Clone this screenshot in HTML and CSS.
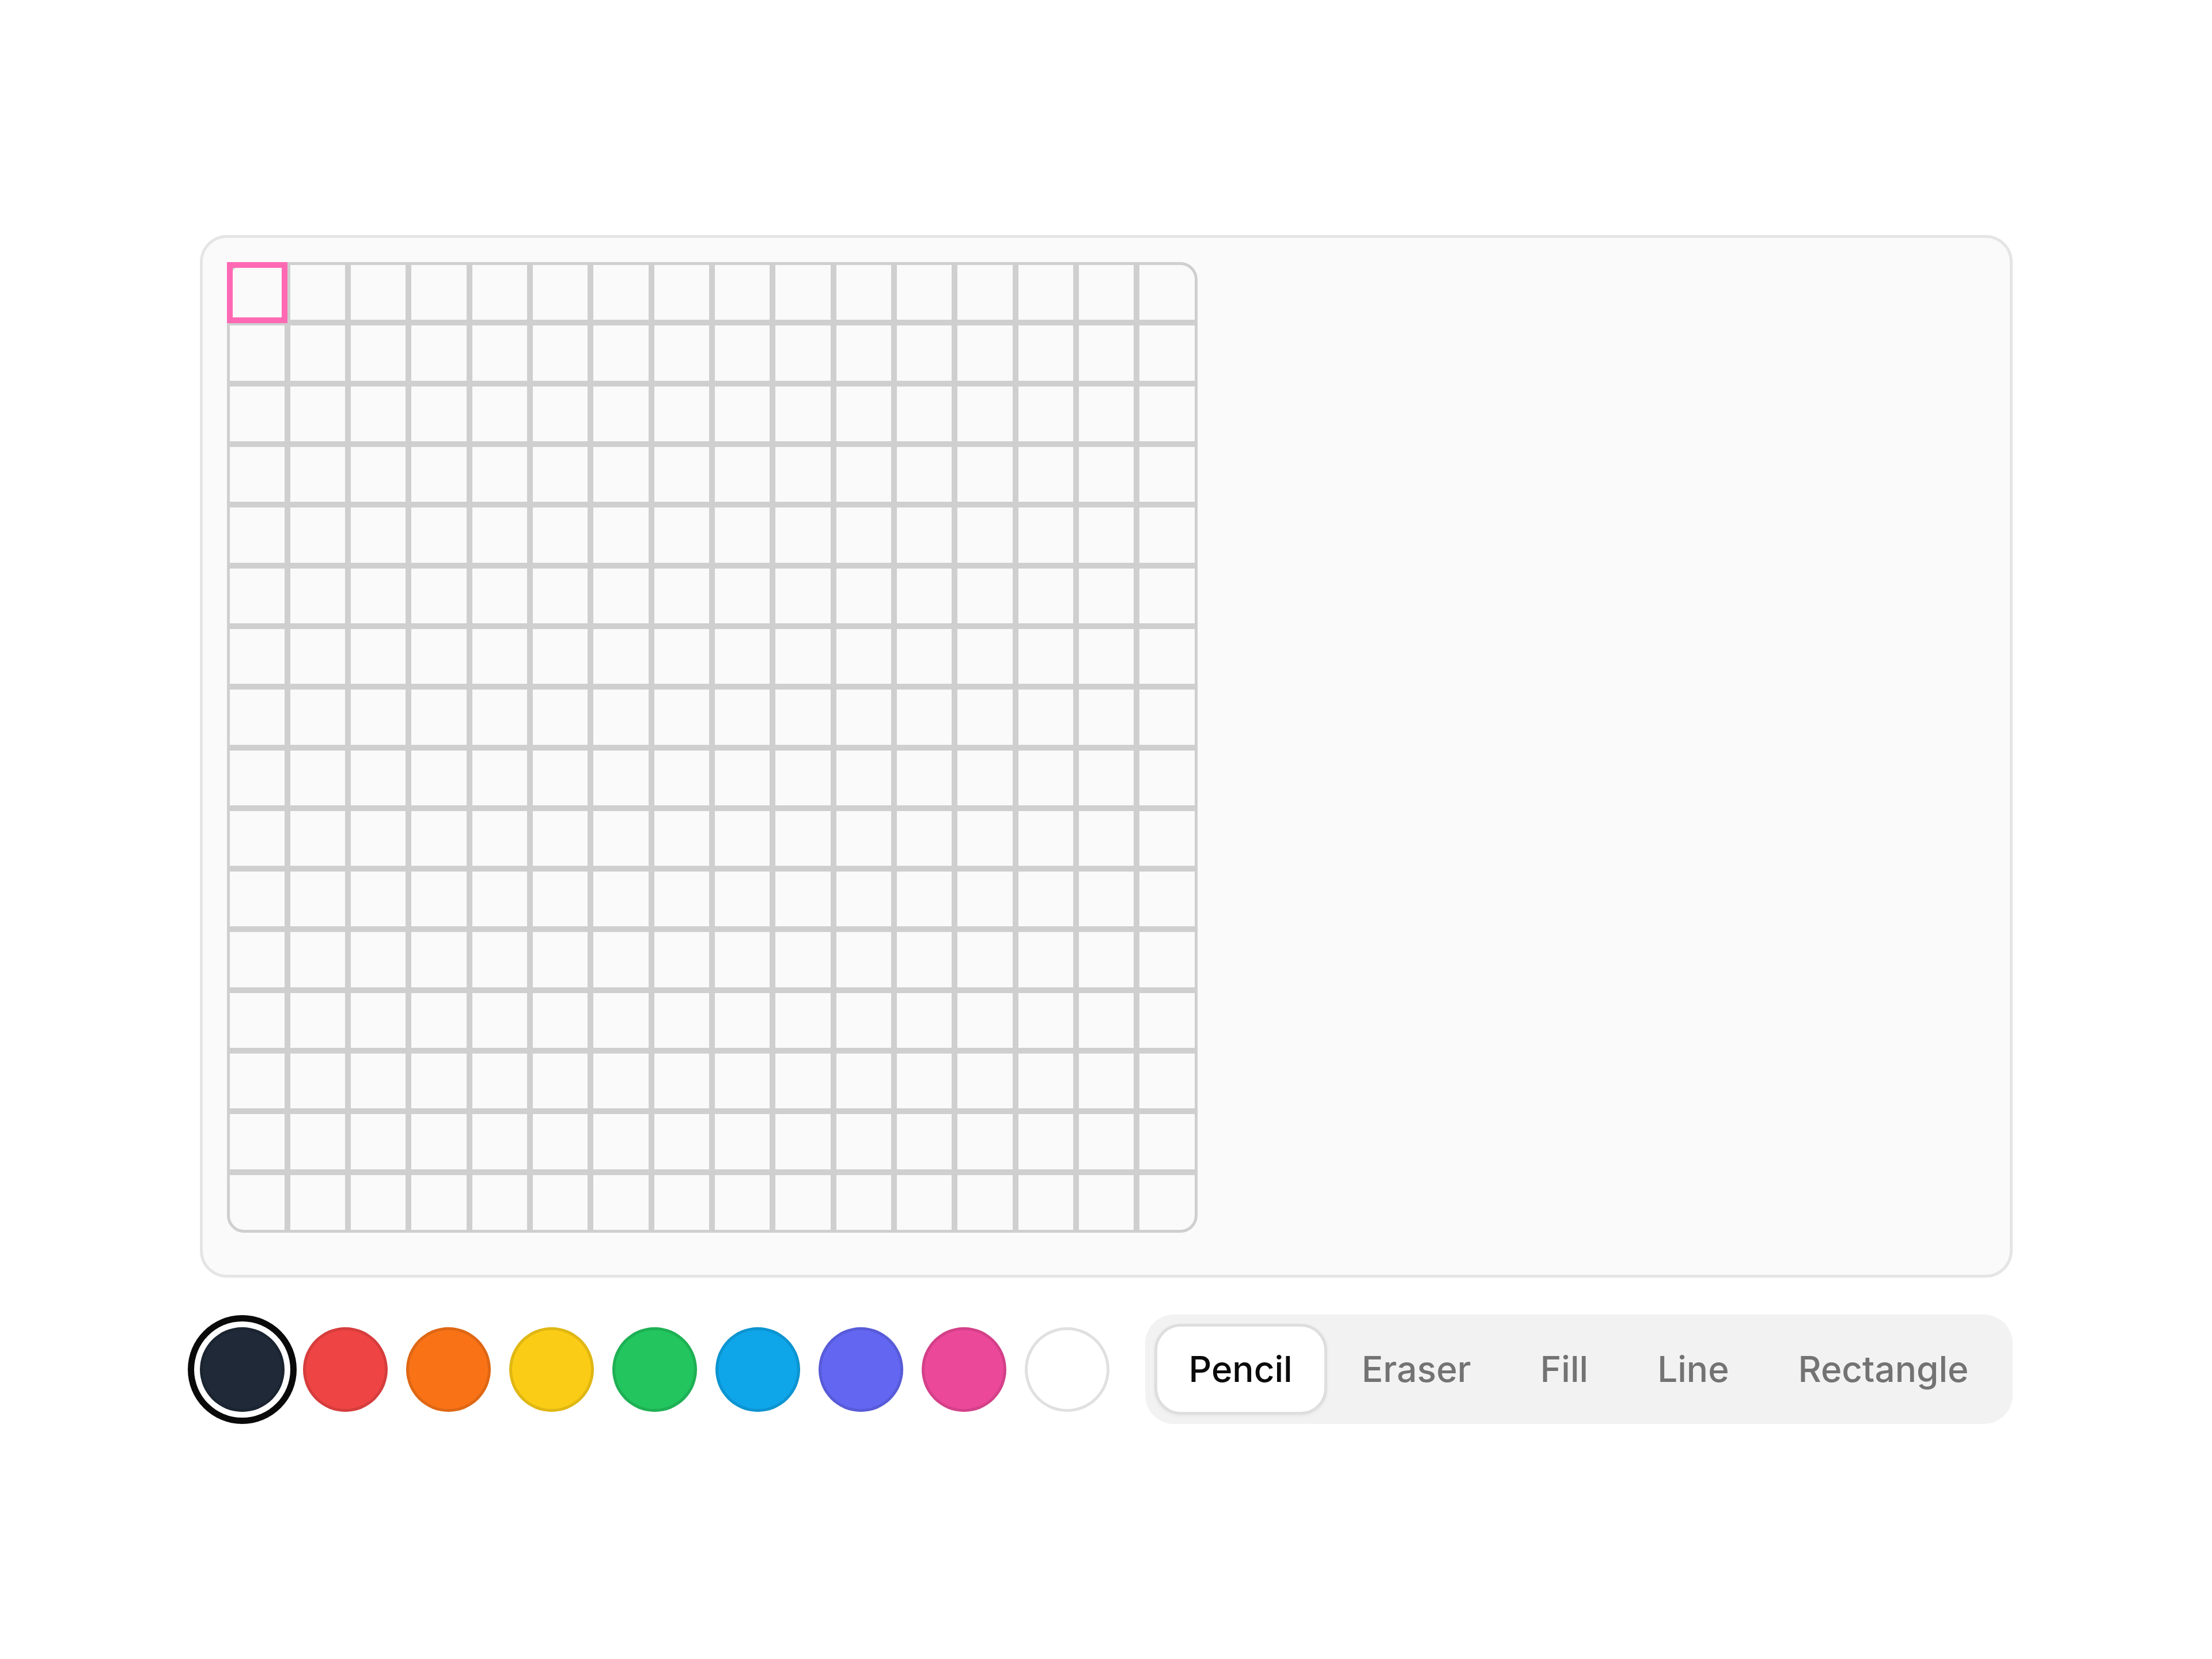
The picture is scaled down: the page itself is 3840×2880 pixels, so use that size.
FILE: index.html
```html
<!DOCTYPE html>
<html lang="en">
<head>
<meta charset="utf-8">
<title>Pixel Editor</title>
<link rel="stylesheet" href="styles.css">
</head>
<body>
<main class="editor">
  <section class="panel">
    <div class="board">
      <div class="grid">
        <span class="c"></span><span class="c"></span><span class="c"></span><span class="c"></span><span class="c"></span><span class="c"></span><span class="c"></span><span class="c"></span><span class="c"></span><span class="c"></span><span class="c"></span><span class="c"></span><span class="c"></span><span class="c"></span><span class="c"></span><span class="c"></span>
        <span class="c"></span><span class="c"></span><span class="c"></span><span class="c"></span><span class="c"></span><span class="c"></span><span class="c"></span><span class="c"></span><span class="c"></span><span class="c"></span><span class="c"></span><span class="c"></span><span class="c"></span><span class="c"></span><span class="c"></span><span class="c"></span>
        <span class="c"></span><span class="c"></span><span class="c"></span><span class="c"></span><span class="c"></span><span class="c"></span><span class="c"></span><span class="c"></span><span class="c"></span><span class="c"></span><span class="c"></span><span class="c"></span><span class="c"></span><span class="c"></span><span class="c"></span><span class="c"></span>
        <span class="c"></span><span class="c"></span><span class="c"></span><span class="c"></span><span class="c"></span><span class="c"></span><span class="c"></span><span class="c"></span><span class="c"></span><span class="c"></span><span class="c"></span><span class="c"></span><span class="c"></span><span class="c"></span><span class="c"></span><span class="c"></span>
        <span class="c"></span><span class="c"></span><span class="c"></span><span class="c"></span><span class="c"></span><span class="c"></span><span class="c"></span><span class="c"></span><span class="c"></span><span class="c"></span><span class="c"></span><span class="c"></span><span class="c"></span><span class="c"></span><span class="c"></span><span class="c"></span>
        <span class="c"></span><span class="c"></span><span class="c"></span><span class="c"></span><span class="c"></span><span class="c"></span><span class="c"></span><span class="c"></span><span class="c"></span><span class="c"></span><span class="c"></span><span class="c"></span><span class="c"></span><span class="c"></span><span class="c"></span><span class="c"></span>
        <span class="c"></span><span class="c"></span><span class="c"></span><span class="c"></span><span class="c"></span><span class="c"></span><span class="c"></span><span class="c"></span><span class="c"></span><span class="c"></span><span class="c"></span><span class="c"></span><span class="c"></span><span class="c"></span><span class="c"></span><span class="c"></span>
        <span class="c"></span><span class="c"></span><span class="c"></span><span class="c"></span><span class="c"></span><span class="c"></span><span class="c"></span><span class="c"></span><span class="c"></span><span class="c"></span><span class="c"></span><span class="c"></span><span class="c"></span><span class="c"></span><span class="c"></span><span class="c"></span>
        <span class="c"></span><span class="c"></span><span class="c"></span><span class="c"></span><span class="c"></span><span class="c"></span><span class="c"></span><span class="c"></span><span class="c"></span><span class="c"></span><span class="c"></span><span class="c"></span><span class="c"></span><span class="c"></span><span class="c"></span><span class="c"></span>
        <span class="c"></span><span class="c"></span><span class="c"></span><span class="c"></span><span class="c"></span><span class="c"></span><span class="c"></span><span class="c"></span><span class="c"></span><span class="c"></span><span class="c"></span><span class="c"></span><span class="c"></span><span class="c"></span><span class="c"></span><span class="c"></span>
        <span class="c"></span><span class="c"></span><span class="c"></span><span class="c"></span><span class="c"></span><span class="c"></span><span class="c"></span><span class="c"></span><span class="c"></span><span class="c"></span><span class="c"></span><span class="c"></span><span class="c"></span><span class="c"></span><span class="c"></span><span class="c"></span>
        <span class="c"></span><span class="c"></span><span class="c"></span><span class="c"></span><span class="c"></span><span class="c"></span><span class="c"></span><span class="c"></span><span class="c"></span><span class="c"></span><span class="c"></span><span class="c"></span><span class="c"></span><span class="c"></span><span class="c"></span><span class="c"></span>
        <span class="c"></span><span class="c"></span><span class="c"></span><span class="c"></span><span class="c"></span><span class="c"></span><span class="c"></span><span class="c"></span><span class="c"></span><span class="c"></span><span class="c"></span><span class="c"></span><span class="c"></span><span class="c"></span><span class="c"></span><span class="c"></span>
        <span class="c"></span><span class="c"></span><span class="c"></span><span class="c"></span><span class="c"></span><span class="c"></span><span class="c"></span><span class="c"></span><span class="c"></span><span class="c"></span><span class="c"></span><span class="c"></span><span class="c"></span><span class="c"></span><span class="c"></span><span class="c"></span>
        <span class="c"></span><span class="c"></span><span class="c"></span><span class="c"></span><span class="c"></span><span class="c"></span><span class="c"></span><span class="c"></span><span class="c"></span><span class="c"></span><span class="c"></span><span class="c"></span><span class="c"></span><span class="c"></span><span class="c"></span><span class="c"></span>
        <span class="c"></span><span class="c"></span><span class="c"></span><span class="c"></span><span class="c"></span><span class="c"></span><span class="c"></span><span class="c"></span><span class="c"></span><span class="c"></span><span class="c"></span><span class="c"></span><span class="c"></span><span class="c"></span><span class="c"></span><span class="c"></span>
      </div>
      <div class="cursor"></div>
    </div>
  </section>
  <div class="controls">
    <div class="palette">
      <button class="swatch sw-slate selected" aria-label="Slate"></button>
      <button class="swatch sw-red" aria-label="Red"></button>
      <button class="swatch sw-orange" aria-label="Orange"></button>
      <button class="swatch sw-yellow" aria-label="Yellow"></button>
      <button class="swatch sw-green" aria-label="Green"></button>
      <button class="swatch sw-sky" aria-label="Sky"></button>
      <button class="swatch sw-indigo" aria-label="Indigo"></button>
      <button class="swatch sw-pink" aria-label="Pink"></button>
      <button class="swatch sw-white" aria-label="White"></button>
    </div>
    <div class="tools">
      <button class="tool active">Pencil</button>
      <button class="tool">Eraser</button>
      <button class="tool">Fill</button>
      <button class="tool">Line</button>
      <button class="tool">Rectangle</button>
    </div>
  </div>
</main>
</body>
</html>
```
FILE: styles.css
```css
* {
  box-sizing: border-box;
}

html, body {
  margin: 0;
  padding: 0;
  background: #ffffff;
}

body {
  min-height: 100vh;
  display: flex;
  align-items: center;
  justify-content: center;
  font-family: Inter, "Noto Sans", "Liberation Sans", sans-serif;
}

.editor {
  width: 3147px;
  display: flex;
  flex-direction: column;
  gap: 64px;
}

.panel {
  background: #fafafa;
  border: 5px solid #e5e5e5;
  border-radius: 47px;
  padding: 42px 42px 73px 42px;
}

.board {
  position: relative;
  width: 1685px;
  height: 1685px;
}

.grid {
  display: grid;
  grid-template-columns: repeat(16, 1fr);
  grid-template-rows: repeat(16, 1fr);
  width: 100%;
  height: 100%;
}

.c {
  display: block;
  background: #fafafa;
  border: 5px solid #cfcfcf;
}

.c:nth-child(1) { border-top-left-radius: 30px; }
.c:nth-child(16) { border-top-right-radius: 30px; }
.c:nth-child(241) { border-bottom-left-radius: 30px; }
.c:nth-child(256) { border-bottom-right-radius: 30px; }

.cursor {
  position: absolute;
  top: 0;
  left: 0;
  width: 105.5px;
  height: 105.5px;
  border: 10.5px solid #ff69b4;
  pointer-events: none;
}

.controls {
  display: flex;
  align-items: center;
  justify-content: space-between;
}

.palette {
  display: flex;
  align-items: center;
  gap: 32px;
}

.swatch {
  width: 147px;
  height: 147px;
  border-radius: 50%;
  border: 5px solid rgba(0, 0, 0, 0.1);
  padding: 0;
  margin: 0;
  cursor: pointer;
}

.swatch.selected {
  box-shadow: 0 0 0 10px #ffffff, 0 0 0 21px #0a0a0a;
}

.sw-slate { background: #1f2937; }
.sw-red { background: #ef4444; }
.sw-orange { background: #f97316; }
.sw-yellow { background: #facc15; }
.sw-green { background: #22c55e; }
.sw-sky { background: #0ea5e9; }
.sw-indigo { background: #6366f1; }
.sw-pink { background: #ec4899; }
.sw-white { background: #ffffff; border-color: rgba(0, 0, 0, 0.12); }

.tools {
  display: flex;
  align-items: center;
  background: #f2f2f2;
  border-radius: 50px;
  padding: 16px;
}

.tool {
  height: 158px;
  padding: 0 55px;
  border: 5px solid transparent;
  border-radius: 46px;
  background: transparent;
  font-family: Inter, "Noto Sans", "Liberation Sans", sans-serif;
  font-size: 62px;
  font-weight: 500;
  color: #737373;
  cursor: pointer;
  line-height: 1;
}

.tool.active {
  background: #ffffff;
  border-color: #dedede;
  color: #0a0a0a;
  box-shadow: 0 2px 6px rgba(0, 0, 0, 0.05);
}
```
